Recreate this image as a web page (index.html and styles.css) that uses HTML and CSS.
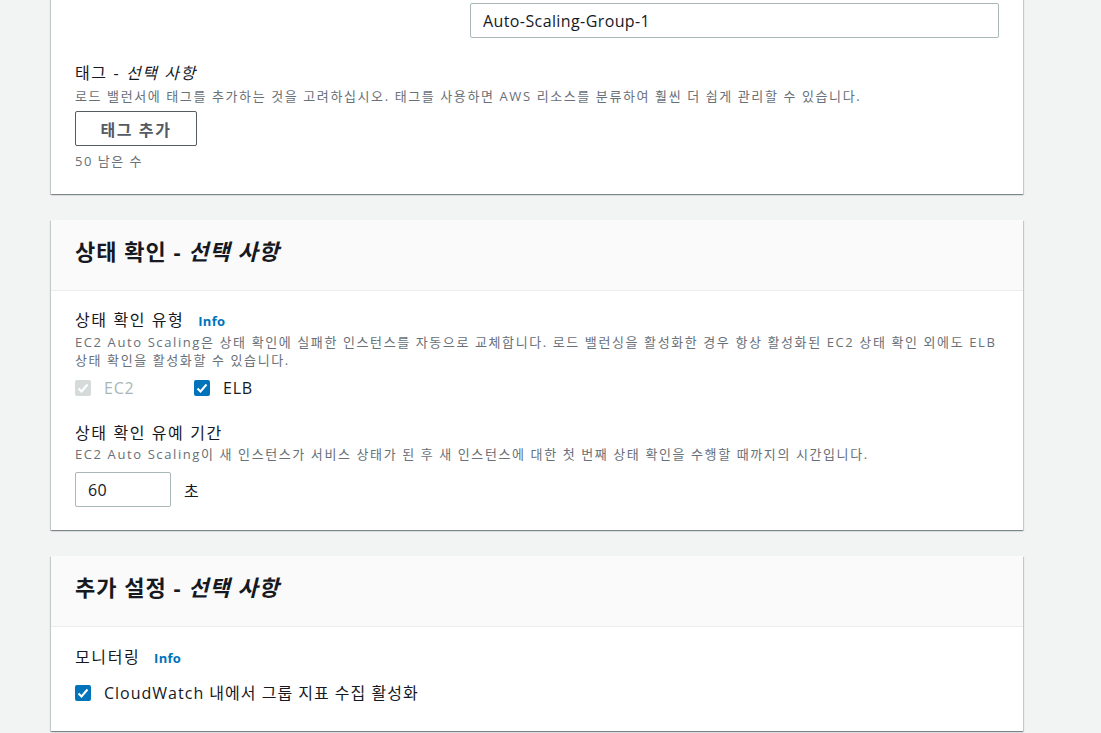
FILE: index.html
```html
<!DOCTYPE html>
<html lang="ko">
<head>
    <meta charset="UTF-8">
    <meta name="viewport" content="width=device-width, initial-scale=1.0">
    <title>Auto Scaling 그룹 - 고급 옵션</title>
    <link rel="stylesheet" href="styles.css">
</head>
<body>
    <div class="page">

        <div class="card card-top">
            <div class="card-body">
                <div class="name-row">
                    <input class="text-input name-input" type="text" value="Auto-Scaling-Group-1">
                </div>

                <div class="field tags">
                    <div class="label">태그 - <em>선택 사항</em></div>
                    <div class="desc">로드 밸런서에 태그를 추가하는 것을 고려하십시오. 태그를 사용하면 AWS 리소스를 분류하여 훨씬 더 쉽게 관리할 수 있습니다.</div>
                    <button class="btn" type="button">태그 추가</button>
                    <div class="hint">50 남은 수</div>
                </div>
            </div>
        </div>

        <div class="card">
            <div class="card-header">
                <h2>상태 확인 - <em>선택 사항</em></h2>
            </div>
            <div class="card-body">
                <div class="field">
                    <div class="label">상태 확인 유형 <a class="info" href="#">Info</a></div>
                    <div class="desc">EC2 Auto Scaling은 상태 확인에 실패한 인스턴스를 자동으로 교체합니다. 로드 밸런싱을 활성화한 경우 항상 활성화된 EC2 상태 확인 외에도 ELB 상태 확인을 활성화할 수 있습니다.</div>
                    <div class="checks">
                        <label class="check disabled">
                            <span class="box"><svg viewBox="0 0 16 16"><path d="M3.5 8.5l3 3 6-7"/></svg></span>
                            EC2
                        </label>
                        <label class="check">
                            <span class="box"><svg viewBox="0 0 16 16"><path d="M3.5 8.5l3 3 6-7"/></svg></span>
                            ELB
                        </label>
                    </div>
                </div>

                <div class="field">
                    <div class="label">상태 확인 유예 기간</div>
                    <div class="desc">EC2 Auto Scaling이 새 인스턴스가 서비스 상태가 된 후 새 인스턴스에 대한 첫 번째 상태 확인을 수행할 때까지의 시간입니다.</div>
                    <div class="grace-row">
                        <input class="text-input grace-input" type="text" value="60">
                        <span class="unit">초</span>
                    </div>
                </div>
            </div>
        </div>

        <div class="card">
            <div class="card-header">
                <h2>추가 설정 - <em>선택 사항</em></h2>
            </div>
            <div class="card-body body-last">
                <div class="field">
                    <div class="label">모니터링 <a class="info" href="#">Info</a></div>
                    <label class="check single">
                        <span class="box"><svg viewBox="0 0 16 16"><path d="M3.5 8.5l3 3 6-7"/></svg></span>
                        CloudWatch 내에서 그룹 지표 수집 활성화
                    </label>
                </div>
            </div>
        </div>

    </div>
</body>
</html>
```

FILE: styles.css
```css
body {
    margin: 0;
    background-color: #f2f3f3;
    font-family: "Open Sans", "Noto Sans CJK KR", sans-serif;
    font-size: 16px;
    color: #16191f;
    overflow: hidden;
}
.page {
    width: 972px;
    margin-left: 51px;
    margin-top: -20px;
}
.card {
    background-color: #ffffff;
    margin-bottom: 26px;
    box-shadow: 0 1px 1px 0 rgba(0, 28, 36, 0.3),
                1px 1px 1px 0 rgba(0, 28, 36, 0.15),
                -1px 1px 1px 0 rgba(0, 28, 36, 0.15);
}
.card-header {
    box-sizing: border-box;
    background-color: #fafafa;
    border-bottom: 1px solid #eaeded;
    height: 71px;
    padding: 0 24px 11px;
    display: flex;
    align-items: center;
}
.card-header h2 {
    margin: 0;
    font-size: 22px;
    letter-spacing: 1px;
    font-weight: bold;
    color: #16191f;
}
.card-body {
    padding: 17px 24px 23px;
}
.card-top .card-body {
    padding-top: 23px;
    padding-bottom: 23px;
}
.body-last {
    padding-top: 18px;
    padding-bottom: 27px;
}
.name-row {
    display: flex;
    justify-content: flex-end;
    margin-bottom: 23px;
}
.text-input {
    box-sizing: border-box;
    height: 35px;
    border: 1px solid #aab7b8;
    border-radius: 2px;
    padding: 0 12px;
    font-family: inherit;
    font-size: 16px;
    letter-spacing: 0.4px;
    color: #16191f;
    background: #fff;
}
.name-input {
    width: 529px;
}
.field {
    margin-bottom: 22px;
}
.field:last-child {
    margin-bottom: 0;
}
.label {
    font-size: 16px;
    letter-spacing: 1.6px;
    line-height: 24px;
    color: #16191f;
}
.label em {
    font-style: italic;
}
.info {
    font-size: 13px;
    letter-spacing: 0.3px;
    font-weight: bold;
    color: #0073bb;
    text-decoration: none;
    margin-left: 8px;
}
.desc {
    font-size: 13px;
    letter-spacing: 1.6px;
    line-height: 18px;
    color: #687078;
}
.tags .desc {
    margin-top: 2px;
}
.btn {
    margin-top: 6px;
    width: 122px;
    height: 35px;
    border: 1px solid #545b64;
    border-radius: 2px;
    background: #fff;
    color: #545b64;
    font-family: inherit;
    font-size: 16px;
    letter-spacing: 1.6px;
    font-weight: bold;
}
.hint {
    margin-top: 5px;
    font-size: 13px;
    letter-spacing: 1.5px;
    line-height: 20px;
    color: #687078;
}
.checks {
    display: flex;
    margin-top: 8px;
}
.check {
    display: flex;
    align-items: center;
    gap: 13px;
    font-size: 16px;
    letter-spacing: 0.8px;
    line-height: 22px;
    color: #16191f;
    width: 119px;
}
.check.single {
    width: auto;
    margin-top: 12px;
    letter-spacing: 1px;
}
.check.disabled {
    color: #aab7b8;
}
.box {
    width: 16px;
    height: 16px;
    border-radius: 2px;
    background-color: #0073bb;
    display: flex;
}
.check.disabled .box {
    background-color: #d5dbdb;
}
.box svg {
    width: 16px;
    height: 16px;
    fill: none;
    stroke: #fff;
    stroke-width: 2;
}
.grace-row {
    display: flex;
    align-items: center;
    gap: 13px;
    margin-top: 9px;
}
.grace-input {
    width: 96px;
}
.unit {
    font-size: 16px;
}
```
